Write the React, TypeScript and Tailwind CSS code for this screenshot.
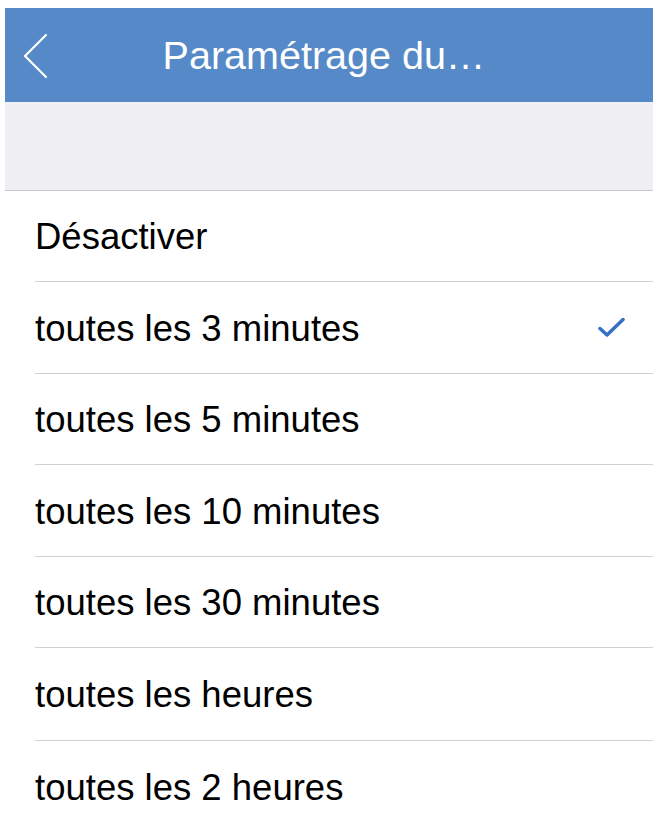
import React from "react";

const rows: { label: string; h: string; checked?: boolean }[] = [
  { label: "Désactiver", h: "h-[91px]" },
  { label: "toutes les 3 minutes", h: "h-[92px]", checked: true },
  { label: "toutes les 5 minutes", h: "h-[91px]" },
  { label: "toutes les 10 minutes", h: "h-[92px]" },
  { label: "toutes les 30 minutes", h: "h-[91px]" },
  { label: "toutes les heures", h: "h-[93px]" },
  { label: "toutes les 2 heures", h: "h-[92px]" },
];

export default function App() {
  return (
    <div
      className="min-h-[821px] w-[659px] bg-white pl-[5px] pt-[8px]"
      style={{ fontFamily: '"Liberation Sans", Arial, sans-serif' }}
    >
      <div className="w-[648px]">
        <div className="relative flex h-[94px] items-center justify-center bg-[#5589c7]">
          <svg
            className="absolute left-0 top-0"
            width="60"
            height="94"
            viewBox="0 0 60 94"
            fill="none"
          >
            <path
              d="M41 27 L20 48 L41 69"
              stroke="#ffffff"
              strokeWidth="2.2"
              strokeLinecap="round"
              strokeLinejoin="round"
            />
          </svg>
          <span className="mr-[10px] pt-[2px] text-[39.5px] leading-none text-white">
            Paramétrage du…
          </span>
        </div>
        <div className="h-[89px] border-b border-[#c8c7cc] bg-[#efeff4]" />
        <div className="bg-white">
          {rows.map((r, i) => (
            <div key={i} className={`${r.h} pl-[30px]`}>
              <div
                className={`flex h-full items-center justify-between pr-[28px] ${
                  i < rows.length - 1 ? "border-b border-[#d0d0d4]" : ""
                }`}
              >
                <span className="pt-[3px] text-[36.5px] leading-none text-black">
                  {r.label}
                </span>
                {r.checked && (
                  <svg width="27" height="21" viewBox="0 0 27 21" fill="none">
                    <path
                      d="M2 11.5 L9 18 L25 2.5"
                      stroke="#3570c4"
                      strokeWidth="3.5"
                      strokeLinecap="round"
                      strokeLinejoin="round"
                    />
                  </svg>
                )}
              </div>
            </div>
          ))}
        </div>
      </div>
    </div>
  );
}
